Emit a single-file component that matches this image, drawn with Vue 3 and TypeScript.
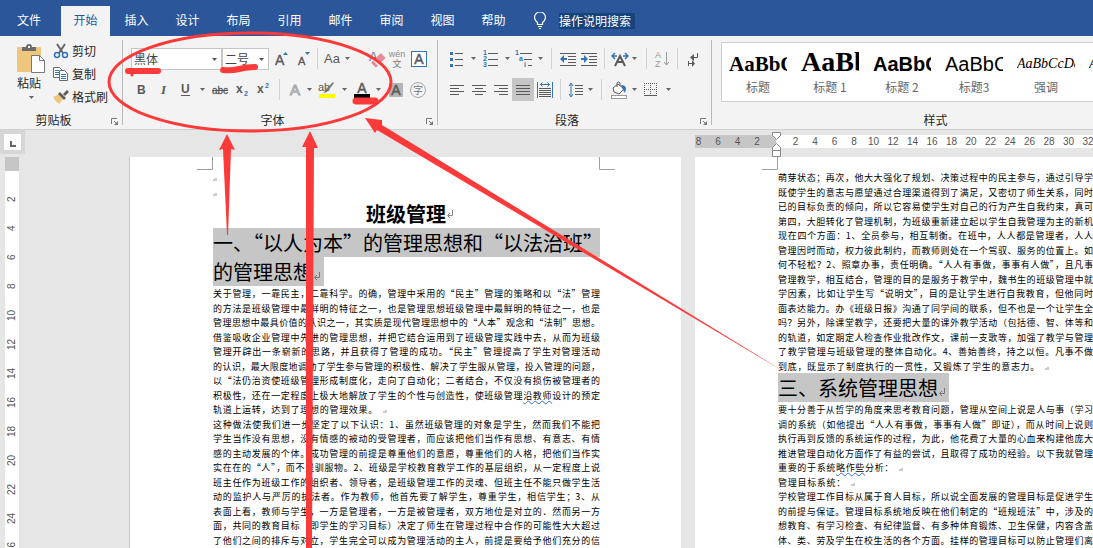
<script setup lang="ts">
import { ref } from 'vue'

interface Tool {
  kind: 'icon' | 'arrow' | 'sep'
  label?: string
  w?: number
  h?: number
  art?: string
  active?: boolean
}

interface Line {
  text: string
  wavy?: string
  rest?: string
  short?: boolean
  mark?: boolean
}

const tabs = ['文件', '开始', '插入', '设计', '布局', '引用', '邮件', '审阅', '视图', '帮助']
const activeTab = ref('开始')
const query = ref('操作说明搜索')
const fontName = ref('黑体')
const fontSize = ref('二号')

const sep: Tool = { kind: 'sep' }
const arrow = (label: string): Tool => ({ kind: 'arrow', label })
const icon = (label: string, w: number, h: number, art: string, active = false): Tool => ({
  kind: 'icon', label, w, h, art, active,
})

const G = '#5a5a5a'
const B = '#3474b5'
const sans = 'font-family="Liberation Sans, sans-serif"'
const cjk = 'font-family="Noto Sans CJK SC, sans-serif"'
const bars = (rows: number[][], color = G) =>
  rows.map(([x, y, w]) => `<rect x="${x}" y="${y}" width="${w}" height="1" fill="${color}"/>`).join('')

const fontTop: Tool[] = [
  icon('增大字号', 14, 18, `<text x="0" y="15" ${sans} font-size="14" fill="${G}" stroke="${G}" stroke-width=".4">A</text><path d="M8 5l2.5-3L13 5z" fill="${B}"/>`),
  icon('减小字号', 14, 18, `<text x="1" y="15" ${sans} font-size="11" fill="${G}" stroke="${G}" stroke-width=".4">A</text><path d="M8 2h5l-2.5 3z" fill="${B}"/>`),
  sep,
  icon('更改大小写', 18, 18, `<text x="1" y="13" ${sans} font-size="13" fill="${G}">Aa</text>`),
  arrow('大小写选项'),
  icon('清除所有格式', 20, 18, `<text x="3" y="11" ${sans} font-size="13" fill="#777">A</text><g transform="rotate(-45 12 10)"><rect x="5" y="7" width="14" height="7" rx="1" fill="#e58b9c"/><rect x="8" y="7" width="2" height="7" fill="#fbeef0"/></g>`),
  icon('拼音指南', 22, 18, `<text x="11" y="7" text-anchor="middle" ${sans} font-size="9" fill="#8a8a8a">wén</text><text x="11" y="17" text-anchor="middle" ${cjk} font-size="9" fill="#777">文</text>`),
  icon('字符边框', 16, 16, `<rect x=".5" y=".5" width="15" height="15" fill="#fff" stroke="${B}"/><text x="8" y="13" text-anchor="middle" ${sans} font-size="14" fill="${G}" stroke="${G}" stroke-width=".5">A</text>`),
]

const fontBottom: Tool[] = [
  icon('加粗', 12, 16, `<text x="1" y="12" ${sans} font-size="12" font-weight="700" fill="${G}">B</text>`),
  icon('倾斜', 12, 16, `<text x="3" y="12" font-family="Liberation Serif, serif" font-size="13" font-style="italic" font-weight="700" fill="${G}">I</text>`),
  icon('下划线', 12, 16, `<text x="1" y="11" ${sans} font-size="12" font-weight="700" fill="${G}">U</text><rect x="1" y="13" width="9" height="1" fill="${G}"/>`),
  arrow('下划线选项'),
  icon('删除线', 18, 16, `<text x="9" y="12" text-anchor="middle" ${sans} font-size="10" fill="${G}" stroke="${G}" stroke-width=".3">abc</text><rect x="1" y="8" width="16" height="1" fill="${G}"/>`),
  icon('下标', 14, 16, `<text x="0" y="11" ${sans} font-size="12" font-weight="700" fill="${G}">x</text><text x="8" y="14" ${sans} font-size="7" font-weight="700" fill="${B}">2</text>`),
  icon('上标', 14, 16, `<text x="0" y="11" ${sans} font-size="12" font-weight="700" fill="${G}">x</text><text x="8" y="6" ${sans} font-size="7" font-weight="700" fill="${B}">2</text>`),
  sep,
  icon('文本效果', 16, 18, `<text x="8" y="14" text-anchor="middle" ${sans} font-size="15" fill="#fff" stroke="#a5a5a5">A</text>`),
  arrow('文本效果选项'),
  icon('突出显示', 18, 18, `<text x="0" y="10" ${sans} font-size="11" fill="${G}">ab</text><path d="M16 2 9 11l-3 1 1-3 8-8z" fill="#777"/><rect x="1" y="13" width="16" height="4" fill="#ff0"/>`),
  arrow('突出显示颜色'),
  icon('字体颜色', 18, 18, `<text x="9" y="12" text-anchor="middle" ${sans} font-size="14" fill="${G}" stroke="${G}" stroke-width=".5">A</text><rect x="1" y="13" width="16" height="4" fill="#000"/>`),
  arrow('字体颜色选项'),
  icon('字符底纹', 14, 16, `<rect y="1" width="14" height="14" fill="#b5b5b5"/><text x="7" y="13" text-anchor="middle" ${sans} font-size="14" fill="${G}" stroke="${G}" stroke-width=".5">A</text>`),
  icon('带圈字符', 18, 18, `<circle cx="9" cy="9" r="7.5" fill="none" stroke="#a5a5a5"/><text x="9" y="13" text-anchor="middle" ${cjk} font-size="10" fill="#777">字</text>`),
]

const paraTop: Tool[] = [
  icon('项目符号', 14, 16, `<path d="M0 1h3v3H0zM0 7h3v3H0zM0 13h3v3H0z" fill="${B}"/>${bars([[5, 2, 8], [5, 8, 8], [5, 14, 8]])}`),
  arrow('项目符号库'),
  icon('编号', 16, 18, `<g ${sans} font-size="7" font-weight="700" fill="${B}"><text x="0" y="5">1</text><text x="0" y="11">2</text><text x="0" y="17">3</text></g>${bars([[5, 3, 10], [5, 9, 10], [5, 15, 10]])}`),
  arrow('编号库'),
  icon('多级列表', 18, 18, `<g ${sans} font-size="7" font-weight="700" fill="${B}"><text x="0" y="5">1</text><text x="4" y="11">a</text><text x="9" y="17">i</text></g>${bars([[5, 3, 12], [9, 9, 8], [13, 15, 4]])}`),
  arrow('列表库'),
  sep,
  icon('减少缩进量', 16, 14, `${bars([[0, 1, 16], [8, 4, 8], [8, 7, 8], [8, 10, 8], [0, 13, 16]])}<path d="M0 7 4 3v3h3v2H4v3z" fill="${B}"/>`),
  icon('增加缩进量', 16, 14, `${bars([[0, 1, 16], [8, 4, 8], [8, 7, 8], [8, 10, 8], [0, 13, 16]])}<path d="M7 7 3 3v3H0v2h3v3z" fill="${B}"/>`),
  sep,
  icon('中文版式', 18, 16, `<path d="M4 15 9 5l5 10M6 11h6" fill="none" stroke="${G}" stroke-width="2"/><path d="M1 5h5M4 2 1 5l3 3M17 5h-5M14 2l3 3-3 3" fill="none" stroke="${B}" stroke-width="1.5"/>`),
  arrow('中文版式选项'),
  sep,
  icon('排序', 16, 18, `<g ${sans} font-size="9" fill="#9a9a9a"><text x="0" y="8">A</text><text x="0" y="17">Z</text></g><path d="M11.5 2v13M9 12l2.5 3 2.5-3" fill="none" stroke="#9a9a9a"/>`),
  sep,
  icon('显示编辑标记', 14, 16, `<path d="M11.5 2v4.500H6M2.500 10v5M3 12.500h4" fill="none" stroke="${G}"/><path d="M4 6.500 8 3v7zM9 12.500 6 9v7z" fill="${G}"/>`),
]

const paraBottom: Tool[] = [
  icon('左对齐', 14, 14, bars([[0, 2, 14], [0, 5, 9], [0, 8, 14], [0, 11, 9]])),
  icon('居中', 14, 14, bars([[0, 2, 14], [3, 5, 8], [0, 8, 14], [3, 11, 8]])),
  icon('右对齐', 14, 14, bars([[0, 2, 14], [5, 5, 9], [0, 8, 14], [5, 11, 9]])),
  icon('两端对齐', 14, 14, bars([[0, 2, 14], [0, 5, 14], [0, 8, 14], [0, 11, 14]]), true),
  icon('分散对齐', 16, 16, `<path d="M.5 0v16M15.5 0v16M3 2.5h10M5.500.5l-2 2 2 2M10.500.5l2 2-2 2" fill="none" stroke="${B}"/>${bars([[2, 6, 12], [2, 8, 12], [2, 10, 12], [2, 12, 12], [2, 14, 12]])}`),
  sep,
  icon('行距', 16, 16, `<path d="M3 2v12M1 4l2-3 2 3M1 12l2 3 2-3" fill="none" stroke="${B}"/>${bars([[7, 3, 8], [7, 6, 8], [7, 9, 8], [7, 12, 8]])}`),
  arrow('行距选项'),
  sep,
  icon('底纹', 18, 18, `<path d="M3 7 8 3l6 5-5 5-5-2zM7 6V2q2-2 3 0v3" fill="#fff" stroke="${G}"/><path d="M11 4q5 0 5 4l-1 4-2-3z" fill="${B}"/><rect x="1.5" y="14.5" width="15" height="3" fill="#fff" stroke="#999"/>`),
  arrow('底纹颜色'),
  icon('边框', 14, 14, `<path d="M.5 0v13M6.5 0v13M12.5 0v13M0 .5h13M0 6.5h13" stroke="${G}" stroke-dasharray="1 1" fill="none"/><rect y="12" width="13" height="1" fill="${G}"/>`),
  arrow('边框选项'),
]

const styles = [
  { sample: 'AaBbC', name: '标题', cls: 's-title' },
  { sample: 'AaBb', name: '标题 1', cls: 's-h1' },
  { sample: 'AaBbC', name: '标题 2', cls: 's-h2' },
  { sample: 'AaBbC', name: '标题3', cls: 's-h3' },
  { sample: 'AaBbCcDd', name: '强调', cls: 's-em' },
  { sample: 'AaBbCcDd', name: '要点', cls: 's-em' },
]

const marksLeft = [8, 6, 4, 2]
const marksRight = Array.from({ length: 17 }, (_, i) => (i + 1) * 2)
const marksDown = Array.from({ length: 13 }, (_, i) => (i + 1) * 2)

const leftLines: Line[] = [
  { text: '关于管理，一靠民主，二靠科学。的确，管理中采用的“民主”管理的策略和以“法”管理' },
  { text: '的方法是班级管理中最鲜明的特征之一，也是管理思想班级管理中最鲜明的特征之一，也是' },
  { text: '管理思想中最具价值的认识之一，其实质是现代管理思想中的“人本”观念和“法制”思想。' },
  { text: '借鉴吸收企业管理中先进的管理思想，并把它结合运用到了班级管理实践中去，从而为班级' },
  { text: '管理开辟出一条崭新的思路，并且获得了管理的成功。“民主”管理提高了学生对管理活动' },
  { text: '的认识，最大限度地调动了学生参与管理的积极性、解决了学生服从管理，投入管理的问题，' },
  { text: '以“法仍治资使班级管理形成制度化，走向了自动化；二者结合，不仅没有损伤被管理者的' },
  { text: '积极性，还在一定程度上极大地解放了学生的个性与创造性，使班级管理', wavy: '沿教师', rest: '设计的预定' },
  { text: '轨道上运转，达到了理想的管理效果。', short: true, mark: true },
  { text: '这种做法使我们进一步坚定了以下认识：1、虽然班级管理的对象是学生，然而我们不能把' },
  { text: '学生当作没有思想，没有情感的被动的受管理者，而应该把他们当作有思想、有意志、有情' },
  { text: '感的主动发展的个体。成功管理的前提是尊重他们的意愿，尊重他们的人格，把他们当作实' },
  { text: '实在在的“人”，而不是驯服物。2、班级是学校教育教学工作的基层组织，从一定程度上说' },
  { text: '班主任作为班级工作的组织者、领导者，是班级管理工作的灵魂、但班主任不能只做学生活' },
  { text: '动的监护人与严厉的执法者。作为教师，他首先要了解学生，尊重学生，相信学生；3、从' },
  { text: '表面上看，教师与学生，一方是管理者，一方是被管理者，双方地位是对立的．然而另一方' },
  { text: '面，共同的教育目标（即学生的学习目标）决定了师生在管理过程中合作的可能性大大超过' },
  { text: '了他们之间的排斥与对立，学生完全可以成为管理活动的主人，前提是要给予他们充分的信' },
]

const rightTop: Line[] = [
  { text: '萌芽状态；再次，他大大强化了规划、决策过程中的民主参与，通过引导学' },
  { text: '既使学生的意志与愿望通过合理渠道得到了满足，又密切了师生关系，同时' },
  { text: '已的目标负责的倾向，所以它容易使学生对自己的行为产生自我约束，真可' },
  { text: '第四，大胆转化了管理机制，为班级重新建立起以学生自我管理为主的新机' },
  { text: '现在四个方面：1、全员参与，相互制衡。在班中，人人都是管理者，人人' },
  { text: '管理因时而动，权力彼此制约，而教师则处在一个驾驭、服务的位置上。如' },
  { text: '何不轻松？2、照章办事，责任明确。“人人有事做，事事有人做”，且凡事' },
  { text: '管理教学，相互结合，管理的目的是服务于教学中，魏书生的班级管理中就' },
  { text: '学因素，比如让学生写“说明文”，目的是让学生进行自我教育，但他同时' },
  { text: '面表达能力。办《班级日报》沟通了同学间的联系，但不也是一个让学生全' },
  { text: '吗？另外，除课堂教学，还要把大量的课外教学活动（包括德、智、体等和' },
  { text: '的轨道，如定期定人检查作业批改作文，课前一支歌等，加强了教学与管理' },
  { text: '了教学管理与班级管理的整体自动化。4、善始善终，持之以恒。凡事不做' },
  { text: '到底，既显示了制度执行的一贯性，又锻炼了学生的意志力。', short: true, mark: true },
]

const rightBottom: Line[] = [
  { text: '要十分善于从哲学的角度来思考教育问题，管理从空间上说是人与事（学习' },
  { text: '调的系统（如他提出“人人有事做，事事有人做”即证），而从时间上说则' },
  { text: '执行再到反馈的系统运作的过程，为此，他花费了大量的心血来构建他庞大' },
  { text: '推进管理自动化方面作了有益的尝试，且取得了成功的经验。以下我就管理' },
  { text: '重要的于系统', wavy: '略作些', rest: '分析：', short: true, mark: true },
  { text: '管理目标系统：', short: true, mark: true },
  { text: '学校管理工作目标从属于育人目标，所以说全面发展的管理目标是促进学生' },
  { text: '的前提与保证。管理目标系统地反映在他们制定的“班规班法”中，涉及的' },
  { text: '想教育、有学习检查、有纪律监督、有多种体育锻炼、卫生保健，内容含盖' },
  { text: '体、类、劳及学生在校生活的各个方面。挂样的管理目标可以防止管理们离' },
]

const span = (l: Line) => {
  if (!l.short) return undefined
  const n = (l.text + (l.wavy ?? '') + (l.rest ?? '')).length
  return { width: `${Math.round(n * 9.7)}px` }
}

const paraRows = [
  { cls: 'para-top', tools: paraTop },
  { cls: 'para-bottom', tools: paraBottom },
]
const columns = [
  { cls: 'upper', lines: rightTop },
  { cls: 'lower', lines: rightBottom },
]
</script>

<template>
  <div class="app">
    <header class="tabs">
      <nav class="tab-list">
        <button v-for="t in tabs" :key="t" class="tab" :class="{ on: t === activeTab }" @click="activeTab = t">{{ t }}</button>
      </nav>
      <label class="tell">
        <svg width="12" height="18" viewBox="0 0 12 18" fill="none" stroke="#fff">
          <path d="M3.5 12.5v-2Q.5 8 .5 5.500a5.500 5.500 0 0 1 11 0Q11.5 8 8.500 10.500v2zM4 14.5h4M5 16.5h2" stroke-width="1.2" />
        </svg>
        <input v-model="query" type="text" aria-label="操作说明搜索" />
      </label>
    </header>

    <section class="ribbon">
      <div class="group clipboard">
        <div class="clip-body">
          <button class="paste">
            <svg width="28" height="29" viewBox="0 0 28 29">
              <rect x="0" y="3" width="24" height="25" rx="1" fill="#eec67f" />
              <path d="M5 3h4q0-3 3-3t3 3h4v4H5z" fill="#6c6c6c" /><rect x="11" y="2" width="2" height="2" fill="#eee" />
              <path d="M14.5 11.5h8l5 5v12h-13z" fill="#fff" stroke="#777" /><path d="M22.5 11.5v5h5" fill="none" stroke="#777" />
            </svg>
            <span>粘贴</span>
            <svg class="tri" width="5" height="3" viewBox="0 0 5 3"><path d="M0 0h5L2.5 3z" fill="#666" /></svg>
          </button>
          <div class="clip-list">
            <button class="clip-item">
              <svg width="16" height="16" viewBox="0 0 16 16" fill="none">
                <path d="M4 1l6 9M12 1 6 10" stroke="#666" stroke-width="2" />
                <circle cx="4" cy="12" r="2.5" stroke="#3474b5" stroke-width="1.5" /><circle cx="12" cy="12" r="2.5" stroke="#3474b5" stroke-width="1.5" />
              </svg>剪切
            </button>
            <button class="clip-item">
              <svg width="16" height="16" viewBox="0 0 16 16" fill="#fff" stroke="#6a6a6a">
                <path d="M.5 1.5h6l3 3v7h-9z" /><path d="M2 4.5h4M2 6.5h4M2 8.5h4" stroke="#3474b5" />
                <path d="M6.5 4.5h5l3 3v7h-8z" /><path d="M8 8.5h5M8 10.5h5M8 12.5h5" stroke="#3474b5" />
              </svg>复制
            </button>
            <button class="clip-item">
              <svg width="16" height="16" viewBox="0 0 16 16">
                <path d="M0 8 6 5l4 5-4 5q-3-2-6-7z" fill="#eec67f" /><path d="M5 5l2-2 6 6-2 2z" fill="#5f5f5f" /><path d="M10 5l4-4 2 2-4 4z" fill="#5f5f5f" />
              </svg>格式刷
            </button>
          </div>
        </div>
        <footer class="caption"><span>剪贴板</span>
          <button class="launch" aria-label="剪贴板设置"><svg width="8" height="8" viewBox="0 0 8 8"><path d="M.5 6V.5H6M3 3l3 3" fill="none" stroke="#777" /><path d="M7 3v4H3z" fill="#777" /></svg></button>
        </footer>
      </div>

      <div class="group font">
        <div class="rows">
          <div class="row font-top">
            <label class="combo">
              <select v-model="fontName" aria-label="字体"><option>黑体</option><option>宋体</option></select>
              <svg width="5" height="3" viewBox="0 0 5 3"><path d="M0 0h5L2.5 3z" fill="#555" /></svg>
            </label>
            <label class="combo">
              <select v-model="fontSize" aria-label="字号"><option>二号</option><option>三号</option></select>
              <svg width="5" height="3" viewBox="0 0 5 3"><path d="M0 0h5L2.5 3z" fill="#555" /></svg>
            </label>
            <template v-for="(t, i) in fontTop" :key="i">
              <i v-if="t.kind === 'sep'" class="sep"></i>
              <button v-else-if="t.kind === 'arrow'" class="tool" :aria-label="t.label"><svg width="5" height="3" viewBox="0 0 5 3"><path d="M0 0h5L2.5 3z" fill="#666" /></svg></button>
              <button v-else class="tool" :class="{ end: t.label === '清除所有格式' }" :aria-label="t.label"><svg :width="t.w" :height="t.h" v-html="t.art"></svg></button>
            </template>
          </div>
          <div class="row font-bottom">
            <template v-for="(t, i) in fontBottom" :key="i">
              <i v-if="t.kind === 'sep'" class="sep"></i>
              <button v-else-if="t.kind === 'arrow'" class="tool" :aria-label="t.label"><svg width="5" height="3" viewBox="0 0 5 3"><path d="M0 0h5L2.5 3z" fill="#666" /></svg></button>
              <button v-else class="tool" :aria-label="t.label"><svg :width="t.w" :height="t.h" v-html="t.art"></svg></button>
            </template>
          </div>
        </div>
        <footer class="caption"><span>字体</span>
          <button class="launch" aria-label="字体设置"><svg width="8" height="8" viewBox="0 0 8 8"><path d="M.5 6V.5H6M3 3l3 3" fill="none" stroke="#777" /><path d="M7 3v4H3z" fill="#777" /></svg></button>
        </footer>
      </div>

      <div class="group para">
        <div class="rows">
          <div v-for="r in paraRows" :key="r.cls" class="row" :class="r.cls">
            <template v-for="(t, i) in r.tools" :key="i">
              <i v-if="t.kind === 'sep'" class="sep"></i>
              <button v-else-if="t.kind === 'arrow'" class="tool" :aria-label="t.label"><svg width="5" height="3" viewBox="0 0 5 3"><path d="M0 0h5L2.5 3z" fill="#666" /></svg></button>
              <button v-else class="tool" :class="{ active: t.active }" :aria-label="t.label"><svg :width="t.w" :height="t.h" v-html="t.art"></svg></button>
            </template>
          </div>
        </div>
        <footer class="caption"><span>段落</span>
          <button class="launch" aria-label="段落设置"><svg width="8" height="8" viewBox="0 0 8 8"><path d="M.5 6V.5H6M3 3l3 3" fill="none" stroke="#777" /><path d="M7 3v4H3z" fill="#777" /></svg></button>
        </footer>
      </div>

      <div class="group styles">
        <div class="gallery">
          <button v-for="(s, i) in styles" :key="i" class="style">
            <span class="sample" :class="s.cls">{{ s.sample }}</span>
            <span class="style-name">{{ s.name }}</span>
          </button>
        </div>
        <footer class="caption"><span>样式</span></footer>
      </div>
    </section>

    <main class="work">
      <aside class="side">
        <div class="corner"><button aria-label="制表符"><svg width="6" height="6" viewBox="0 0 6 6"><path d="M1 0v5h5" fill="none" stroke="#666" stroke-width="2" /></svg></button></div>
        <div class="vruler">
          <div class="vmargin"></div>
          <span v-for="n in marksDown" :key="n">{{ n }}</span>
        </div>
      </aside>
      <div class="canvas">
        <div class="hruler">
          <div class="hmargin"><span v-for="n in marksLeft" :key="n">{{ n }}</span></div>
          <div class="hbody"><span v-for="n in marksRight" :key="n">{{ n }}</span></div>
          <svg class="indent" width="9" height="26" viewBox="0 0 9 26" fill="#fff" stroke="#888">
            <path d="M.5.5h8v3l-4 4-4-4zM4.5 11.5l4 4v9h-8v-9zM.5 18.5h8" />
          </svg>
        </div>

        <article class="page page-left">
          <svg class="crop crop-l" width="16" height="13"><path d="M15.5 0v12.5H0" fill="none" stroke="#a0a0a0" /></svg>
          <svg class="crop crop-r" width="16" height="13"><path d="M.5 0v12.5H16" fill="none" stroke="#a0a0a0" /></svg>
          <p class="blank"><svg class="ret" width="4" height="3"><path d="M3 0v2H0" fill="none" stroke="#ccc" stroke-width="2" /></svg></p>
          <p class="blank"><svg class="ret" width="4" height="3"><path d="M3 0v2H0" fill="none" stroke="#ccc" stroke-width="2" /></svg></p>
          <h1 class="title">班级管理<svg class="enter" width="6" height="8"><path d="M5.5 0v5.5H1M3 3 .5 5.5 3 8" fill="none" stroke="#888" /></svg></h1>
          <h2 class="head full">一、“以人为本”的管理思想和“以法治班”</h2>
          <h2 class="head">的管理思想<svg class="enter" width="6" height="8"><path d="M5.5 0v5.5H1M3 3 .5 5.5 3 8" fill="none" stroke="#777" /></svg></h2>
          <div class="text">
            <p v-for="(l, i) in leftLines" :key="i" class="line" :style="span(l)">{{ l.text }}<u v-if="l.wavy">{{ l.wavy }}</u>{{ l.rest }}<svg v-if="l.mark" class="ret after" width="4" height="3"><path d="M3 0v2H0" fill="none" stroke="#ccc" stroke-width="2" /></svg></p>
          </div>
        </article>

        <article class="page page-right">
          <svg class="crop crop-l" width="16" height="13"><path d="M15.5 0v12.5H0" fill="none" stroke="#a0a0a0" /></svg>
          <template v-for="c in columns" :key="c.cls">
            <h2 v-if="c.cls === 'lower'" class="head">三、系统管理思想<svg class="enter" width="6" height="8"><path d="M5.5 0v5.5H1M3 3 .5 5.5 3 8" fill="none" stroke="#777" /></svg></h2>
            <div class="text">
              <p v-for="(l, i) in c.lines" :key="i" class="line" :style="span(l)">{{ l.text }}<u v-if="l.wavy">{{ l.wavy }}</u>{{ l.rest }}<svg v-if="l.mark" class="ret after" width="4" height="3"><path d="M3 0v2H0" fill="none" stroke="#ccc" stroke-width="2" /></svg></p>
            </div>
          </template>
        </article>
      </div>
    </main>

    <svg class="ink" aria-hidden="true">
      <g fill="none" stroke="#fc3a39" stroke-linecap="round">
        <ellipse cx="250" cy="82" rx="141" ry="49" stroke-width="3" />
        <path d="M128 71h30" stroke-width="6" /><path d="M132 72v3" stroke-width="3" />
        <path d="M223 70q8 1 16-1t16-2" stroke-width="6" />
        <path d="M356 101h19" stroke-width="7" />
      </g>
      <g fill="#fc3a39">
        <path d="M227 134l8 16-4-1-3 86h-1l-4-86-4 1z" />
        <path d="M310 131l8 17h-4l-2 400h-6V147h-4z" />
        <path d="M365 118l17 2v5l406 249-411-244-2 3z" />
      </g>
    </svg>
  </div>
</template>

<style>
body {
  margin: 0;
  overflow: hidden;
}
</style>

<style scoped>
.app {
  position: relative;
  display: flex;
  flex-direction: column;
  height: 100vh;
  overflow: hidden;
  background: #e6e6e6;
  color: #262626;
  font: 12px/16px "Noto Sans CJK SC", "Noto Sans", sans-serif;
}
button, input, select {
  margin: 0;
  padding: 0;
  border: 0;
  border-radius: 0;
  background: none;
  color: inherit;
  font: inherit;
}
svg { flex: none; display: block; }
p, h1, h2 { margin: 0; font-weight: 400; }

.tabs { display: flex; height: 36px; background: #2b579a; color: #fff; }
.tab-list { display: flex; align-items: flex-end; padding-left: 3px; }
.tab { width: 51px; height: 30px; padding-bottom: 2px; }
.tab:first-child { width: 52px; margin-right: 6px; }
.tab.on { width: 49px; margin-right: 1px; background: #f3f3f3; color: #2b579a; }
.tell { display: flex; align-items: center; gap: 13px; margin-left: 15px; padding-top: 6px; }
.tell input { width: 76px; height: 16px; background: #164379; }

.ribbon { display: flex; height: 93px; border-bottom: 1px solid #cfcfcf; background: #f3f3f3; }
.group { display: flex; flex-direction: column; justify-content: space-between; box-sizing: border-box; position: relative; }
.group:not(.styles)::after { content: ""; position: absolute; right: 0; top: 4px; bottom: 4px; width: 1px; background: #b8b8b8; }
.clipboard { width: 123px; }
.font { width: 315px; }
.para { width: 274px; }
.styles { flex: 1; min-width: 0; }
.caption { display: flex; align-items: center; height: 18px; padding-right: 4px; }
.caption span { flex: 1; padding-right: 4px; text-align: center; }
.launch { width: 8px; padding-top: 4px; }

.clip-body { display: flex; padding: 8px 0 0 16px; }
.paste { display: flex; flex-direction: column; align-items: center; width: 30px; }
.paste span { margin-top: 2px; margin-right: 4px; }
.tri { margin-top: 5px; }
.clip-list { display: flex; flex-direction: column; margin-top: -5px; padding-left: 7px; }
.clip-item { display: flex; align-items: center; gap: 3px; height: 23px; white-space: nowrap; }

.rows { display: flex; flex-direction: column; gap: 8px; padding: 11px 0 0 8px; }
.row { display: grid; height: 23px; justify-items: center; align-items: center; }
.font-top { grid-template-columns: 91px 47px 25px 20px 6px 23px 8px 35px 22px 22px; }
.font-bottom { grid-template-columns: 21px 24px 19px 14px 22px 23px 20px 10px 21px 8px 28px 7px 27px 7px 27px 18px; }
.para-top { grid-template-columns: 22px 10px 25px 8px 26px 7px 14px 19px 24px 7px 23px 7px 16px 17px 13px 18px; }
.para-bottom { grid-template-columns: 22px 22px 22px 22px 22px 9px 21px 8px 15px 19px 12px 22px 12px; }
.tool { display: flex; align-items: center; justify-content: center; width: 100%; height: 23px; }
.tool.end { justify-content: flex-end; }
.tool.active { background: #c6c6c6; }
.sep { width: 1px; height: 21px; background: #d2d2d2; }
.combo { position: relative; width: 100%; height: 22px; }
.combo select { appearance: none; width: 100%; height: 22px; padding-left: 2px; border: 1px solid #c6c6c6; background: #fff; color: #444; }
.combo svg { position: absolute; right: 5px; top: 10px; }

.gallery { display: flex; height: 58px; margin: 6px 0 0 9px; overflow: hidden; border: 1px solid #cdcdcd; border-right: 0; background: #fff; }
.style { display: flex; flex: none; flex-direction: column; align-items: center; width: 72px; }
.sample { width: 58px; height: 36px; overflow: hidden; color: #000; line-height: 42px; text-align: left; white-space: nowrap; }
.style-name { color: #666; }
.s-title { font-family: "Liberation Serif", serif; font-size: 21px; font-weight: 700; }
.s-h1 { font-family: "Liberation Serif", serif; font-size: 28px; font-weight: 700; line-height: 38px; }
.s-h2 { font-family: "Liberation Sans", sans-serif; font-size: 20px; font-weight: 700; }
.s-h3 { font-family: "Liberation Sans", sans-serif; font-size: 20px; }
.s-em { font-family: "Liberation Serif", serif; font-size: 14px; font-style: italic; }
.styles .caption { padding: 0 0 0 70px; }

.work { display: flex; flex: 1; min-height: 0; overflow: hidden; }
.side { flex: none; width: 25px; }
.corner { height: 24px; padding: 4px 0 0 4px; box-sizing: border-box; background: #d6d6d6; }
.corner button { display: flex; align-items: center; justify-content: center; width: 17px; height: 16px; padding: 3px 0 0; background: #fcfcfc; }
.vruler { width: 14px; margin: 3px 0 0 5px; background: #fff; color: #555; font: 10px/14px "Liberation Sans", sans-serif; }
.vmargin { height: 14px; margin-bottom: 14px; background: #c6c6c6; }
.vruler span { display: block; height: 29px; writing-mode: vertical-rl; transform: rotate(180deg); text-align: center; }

.canvas { display: grid; flex: 1; min-width: 0; grid-template: 27px 1fr / 551px minmax(0, 1fr); column-gap: 14px; padding-left: 105px; }
.hruler { position: relative; grid-column: 2; display: flex; height: 13px; margin-top: 5px; color: #555; font: 10px/13px "Liberation Sans", sans-serif; }
.hruler span { flex: none; width: 19px; text-align: center; }
.hruler span:nth-child(even) { width: 20px; }
.hmargin { display: flex; flex: none; justify-content: flex-end; box-sizing: border-box; width: 81px; padding-right: 9px; overflow: hidden; background: #c6c6c6; }
.hbody { display: flex; flex: 1; min-width: 0; padding-left: 10px; overflow: hidden; background: #fff; }
.indent { position: absolute; left: 77px; top: -3px; }

.page { position: relative; grid-row: 2; box-sizing: border-box; padding: 13px 0 0 83px; background: #fff; color: #000; }
.page-left { padding-right: 81px; box-shadow: -1px 0 #c6c6c6; }
.page-right { grid-column: 2; }
.crop { position: absolute; top: 0; left: 67px; }
.crop-r { left: auto; right: 66px; }
.blank { height: 15px; padding-top: 8px; box-sizing: border-box; }
.blank + .blank { height: 14px; }
.title { display: flex; align-items: center; justify-content: center; height: 29px; padding-left: 6px; font-size: 20px; font-weight: 700; }
.enter { display: inline-block; margin-left: 1px; }
.head { width: fit-content; height: 29px; padding-right: 4px; box-sizing: border-box; background: #c6c6c6; font-size: 20px; line-height: 29px; white-space: nowrap; }
.head.full { width: 100%; padding: 0; text-align-last: justify; }
.line { height: 15px; font-size: 9px; line-height: 15px; text-align-last: justify; white-space: nowrap; }
.line:nth-child(even) { height: 14px; }
.line u { text-decoration: underline wavy #2f6fea 1px; text-underline-offset: 1px; }
.ret.after { display: inline-block; margin: 0 -9px 0 5px; }

.ink { position: absolute; inset: 0; width: 100%; height: 100%; pointer-events: none; }
</style>
